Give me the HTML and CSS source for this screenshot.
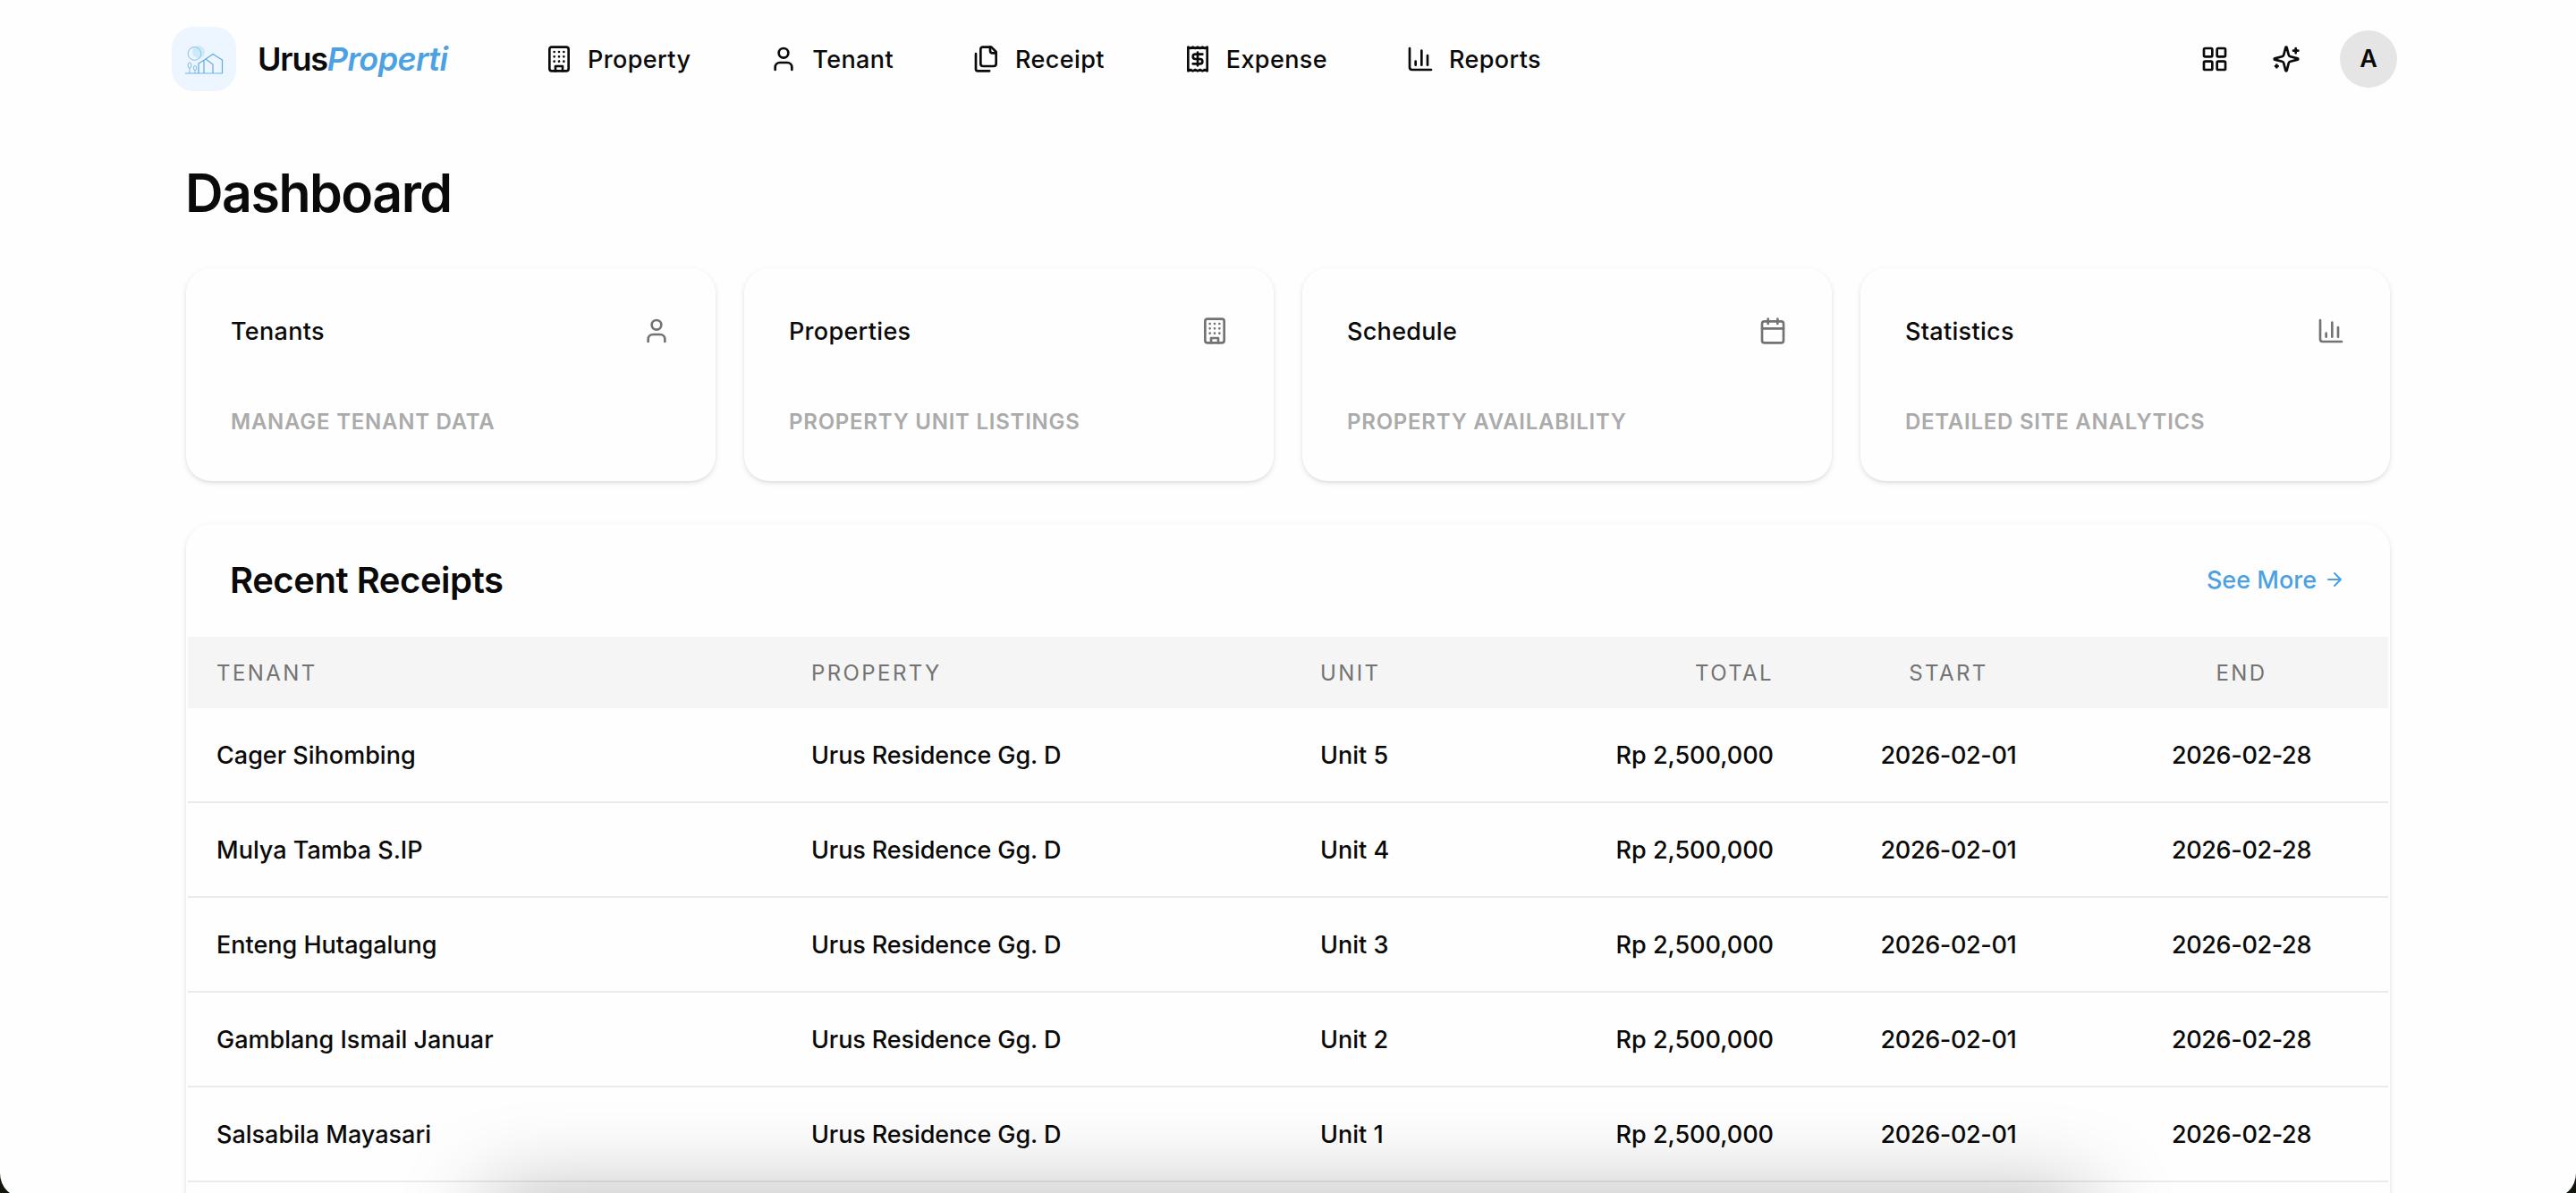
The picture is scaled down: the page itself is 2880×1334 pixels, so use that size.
FILE: index.html
```html
<!DOCTYPE html>
<html lang="en">
<head>
    <meta charset="UTF-8">
    <meta name="viewport" content="width=device-width, initial-scale=1.0">
    <title>UrusProperti - Dashboard</title>
    <link rel="stylesheet" href="styles.css">
</head>
<body>
    <!-- Icon set -->
    <svg class="sprite" aria-hidden="true">
        <symbol id="i-building" viewBox="0 0 24 24">
            <rect x="4" y="2" width="16" height="20" rx="2"/>
            <path d="M9 22v-4h6v4M8 6h.01M12 6h.01M16 6h.01M8 10h.01M12 10h.01M16 10h.01M8 14h.01M12 14h.01M16 14h.01"/>
        </symbol>
        <symbol id="i-user" viewBox="0 0 24 24">
            <circle cx="12" cy="7" r="4"/>
            <path d="M19 21v-2a4 4 0 0 0-4-4H9a4 4 0 0 0-4 4v2"/>
        </symbol>
        <symbol id="i-files" viewBox="0 0 24 24">
            <path d="M20 7h-3a2 2 0 0 1-2-2V2"/>
            <path d="M9 18a2 2 0 0 1-2-2V4a2 2 0 0 1 2-2h7l4 4v10a2 2 0 0 1-2 2Z"/>
            <path d="M3 7.6v12.8A1.6 1.6 0 0 0 4.6 22h9.8"/>
        </symbol>
        <symbol id="i-receipt" viewBox="0 0 24 24">
            <path d="M4 2v20l2-1 2 1 2-1 2 1 2-1 2 1 2-1 2 1V2l-2 1-2-1-2 1-2-1-2 1-2-1-2 1Z"/>
            <path d="M16 8h-6a2 2 0 1 0 0 4h4a2 2 0 1 1 0 4H8M12 17.5v-11"/>
        </symbol>
        <symbol id="i-chart" viewBox="0 0 24 24">
            <path d="M3 3v16a2 2 0 0 0 2 2h16M18 17V9M13 17V5M8 17v-3"/>
        </symbol>
        <symbol id="i-grid" viewBox="0 0 24 24">
            <rect x="3" y="3" width="7" height="7" rx="1"/>
            <rect x="14" y="3" width="7" height="7" rx="1"/>
            <rect x="14" y="14" width="7" height="7" rx="1"/>
            <rect x="3" y="14" width="7" height="7" rx="1"/>
        </symbol>
        <symbol id="i-sparkles" viewBox="0 0 24 24">
            <path d="M9.937 15.5A2 2 0 0 0 8.5 14.063l-6.135-1.582a.5.5 0 0 1 0-.962L8.5 9.936A2 2 0 0 0 9.937 8.5l1.582-6.135a.5.5 0 0 1 .963 0L14.063 8.5A2 2 0 0 0 15.5 9.937l6.135 1.581a.5.5 0 0 1 0 .964L15.5 14.063a2 2 0 0 0-1.437 1.437l-1.582 6.135a.5.5 0 0 1-.963 0z"/>
            <path d="M20 3v4M22 5h-4M4 17v2M5 18H3"/>
        </symbol>
        <symbol id="i-calendar" viewBox="0 0 24 24">
            <path d="M8 2v4M16 2v4M3 10h18"/>
            <rect x="3" y="4" width="18" height="18" rx="2"/>
        </symbol>
        <symbol id="i-arrow" viewBox="0 0 24 24">
            <path d="M5 12h14M12 5l7 7-7 7"/>
        </symbol>
    </svg>

    <div class="window">
        <header class="header">
            <a href="#" class="brand">
                <span class="brand-logo">
                    <svg viewBox="0 0 72 72">
                        <circle cx="30" cy="28" r="7" fill="#cdeaf9"/>
                        <circle cx="25.500" cy="30" r="7.300" stroke="#98caf0" stroke-width="1.200"/>
                        <path d="M15 52h42" stroke="#98caf0" stroke-width="1.600"/>
                        <path d="M20 52v-6M26 52v-4" stroke="#7cbaec"/>
                        <ellipse cx="20" cy="43" rx="1.900" ry="3" stroke="#7cbaec"/>
                        <ellipse cx="26" cy="46" rx="1.700" ry="2.500" stroke="#7cbaec"/>
                        <path d="M30 52V41l8-5 8 6v10M36 52V37M38 36l8-5.500 10.500 6.500v15" stroke="#5dabe7" stroke-width="1.200"/>
                    </svg>
                </span>
                <span class="brand-name">Urus<em>Properti</em></span>
            </a>
            <nav class="nav">
                <a href="#"><svg class="icon"><use href="#i-building"/></svg>Property</a>
                <a href="#"><svg class="icon"><use href="#i-user"/></svg>Tenant</a>
                <a href="#"><svg class="icon"><use href="#i-files"/></svg>Receipt</a>
                <a href="#"><svg class="icon"><use href="#i-receipt"/></svg>Expense</a>
                <a href="#"><svg class="icon"><use href="#i-chart"/></svg>Reports</a>
            </nav>
            <div class="actions">
                <svg class="icon"><use href="#i-grid"/></svg>
                <svg class="icon"><use href="#i-sparkles"/></svg>
                <span class="avatar">A</span>
            </div>
        </header>

        <main class="main">
            <h1>Dashboard</h1>

            <div class="cards">
                <a href="#" class="card">
                    <div class="card-top">Tenants<svg class="icon"><use href="#i-user"/></svg></div>
                    <p>MANAGE TENANT DATA</p>
                </a>
                <a href="#" class="card">
                    <div class="card-top">Properties<svg class="icon"><use href="#i-building"/></svg></div>
                    <p>PROPERTY UNIT LISTINGS</p>
                </a>
                <a href="#" class="card">
                    <div class="card-top">Schedule<svg class="icon"><use href="#i-calendar"/></svg></div>
                    <p>PROPERTY AVAILABILITY</p>
                </a>
                <a href="#" class="card">
                    <div class="card-top">Statistics<svg class="icon"><use href="#i-chart"/></svg></div>
                    <p>DETAILED SITE ANALYTICS</p>
                </a>
            </div>

            <section class="panel">
                <div class="panel-top">
                    <h2>Recent Receipts</h2>
                    <a href="#" class="more">See More<svg class="icon"><use href="#i-arrow"/></svg></a>
                </div>
                <table>
                    <colgroup>
                        <col class="c-tenant"><col class="c-property"><col class="c-unit"><col class="c-total"><col class="c-start"><col class="c-end">
                    </colgroup>
                    <thead>
                        <tr><th>TENANT</th><th>PROPERTY</th><th>UNIT</th><th class="right">TOTAL</th><th class="center">START</th><th class="center">END</th></tr>
                    </thead>
                    <tbody>
                        <tr><td>Cager Sihombing</td><td class="place">Urus Residence Gg. D</td><td>Unit 5</td><td class="right">Rp 2,500,000</td><td class="center date">2026-02-01</td><td class="center date">2026-02-28</td></tr>
                        <tr><td>Mulya Tamba S.IP</td><td class="place">Urus Residence Gg. D</td><td>Unit 4</td><td class="right">Rp 2,500,000</td><td class="center date">2026-02-01</td><td class="center date">2026-02-28</td></tr>
                        <tr><td>Enteng Hutagalung</td><td class="place">Urus Residence Gg. D</td><td>Unit 3</td><td class="right">Rp 2,500,000</td><td class="center date">2026-02-01</td><td class="center date">2026-02-28</td></tr>
                        <tr><td>Gamblang Ismail Januar</td><td class="place">Urus Residence Gg. D</td><td>Unit 2</td><td class="right">Rp 2,500,000</td><td class="center date">2026-02-01</td><td class="center date">2026-02-28</td></tr>
                        <tr><td>Salsabila Mayasari</td><td class="place">Urus Residence Gg. D</td><td>Unit 1</td><td class="right">Rp 2,500,000</td><td class="center date">2026-02-01</td><td class="center date">2026-02-28</td></tr>
                    </tbody>
                </table>
            </section>
        </main>

        <!-- Bottom sheet waiting below the fold -->
        <div class="sheet"></div>
    </div>
</body>
</html>
```
FILE: styles.css
```css
* {
    box-sizing: border-box;
}

html {
    background-color: #11150c;
    height: 100%;
    overflow: hidden;
}

body {
    margin: 0;
    font-family: Inter, 'Liberation Sans', sans-serif;
    font-size: 27px;
    font-weight: 500;
    color: #0a0a0a;
}

a {
    color: inherit;
    text-decoration: none;
}

.sprite {
    display: none;
}

.window {
    position: relative;
    height: 1340px;
    background-color: #fefefe;
    border-radius: 0 0 28px 28px;
    overflow: hidden;
}

.icon {
    width: 32px;
    height: 32px;
    flex: none;
    fill: none;
    stroke: currentColor;
    stroke-width: 2;
    stroke-linecap: round;
    stroke-linejoin: round;
}

/* Header */
.header {
    height: 132px;
    padding: 0 200px 0 192px;
    display: flex;
    align-items: center;
}

.brand {
    width: 417px;
    display: flex;
    align-items: center;
    gap: 24px;
}

.brand-logo {
    width: 72px;
    height: 72px;
    border-radius: 24px;
    background-color: #edf6fe;
}

.brand-logo svg {
    display: block;
    fill: none;
}

.brand-name {
    font-size: 36px;
    font-weight: 600;
    letter-spacing: -1.2px;
}

.brand-name em {
    color: #4ba1e4;
    letter-spacing: -0.6px;
}

.nav {
    display: flex;
    gap: 88px;
}

.nav a {
    display: flex;
    align-items: center;
    gap: 16px;
    letter-spacing: 0.38px;
}

.actions {
    margin-left: auto;
    display: flex;
    align-items: center;
    gap: 48px;
}

.avatar {
    width: 64px;
    height: 64px;
    margin-left: -4px;
    border-radius: 50%;
    background-color: #e5e5e5;
    font-weight: 600;
    line-height: 64px;
    text-align: center;
}

/* Content */
.main {
    padding: 48px 208px 0;
}

h1 {
    margin: 0 0 48px -1px;
    font-size: 59px;
    font-weight: 600;
    line-height: 72px;
    letter-spacing: -1.5px;
}

.cards {
    display: grid;
    grid-template-columns: repeat(4, 1fr);
    gap: 32px;
    margin-bottom: 48px;
}

.card,
.panel {
    background-color: #fefefe;
    border-radius: 28px;
    box-shadow: 0 2px 6px rgba(0, 0, 0, 0.1), 0 2px 4px -2px rgba(0, 0, 0, 0.1);
}

.card {
    height: 238px;
    padding: 50px;
}

.card-top {
    height: 40px;
    display: flex;
    justify-content: space-between;
    align-items: center;
    letter-spacing: 0.3px;
}

.card .icon {
    color: #737373;
}

.card p {
    margin: 66px 0 0;
    font-size: 24px;
    font-weight: 600;
    line-height: 32px;
    letter-spacing: 0.75px;
    color: #ababab;
}

.panel {
    height: 860px;
    padding: 0 2px;
}

.panel-top {
    height: 126px;
    padding: 0 48px 2px;
    display: flex;
    justify-content: space-between;
    align-items: center;
}

h2 {
    margin: 0 0 0 -1px;
    font-size: 40px;
    font-weight: 600;
    letter-spacing: -0.45px;
}

.more {
    display: flex;
    align-items: center;
    gap: 8px;
    color: #4ba1e4;
}

.more .icon {
    width: 24px;
    height: 24px;
}

/* Table */
table {
    width: 100%;
    table-layout: fixed;
    border-collapse: separate;
    border-spacing: 0;
}

.c-tenant { width: 665px; }
.c-property { width: 569px; }
.c-unit { width: 286px; }
.c-total { width: 285px; }
.c-start { width: 329px; }
.c-end { width: 326px; }

th {
    height: 80px;
    padding: 0 32px;
    background-color: #f5f5f5;
    color: #737373;
    font-size: 24px;
    font-weight: 400;
    letter-spacing: 2.4px;
    text-align: left;
}

td {
    height: 106px;
    padding: 0 32px;
    border-bottom: 2px solid #ebebeb;
}

.right {
    text-align: right;
}

.center {
    text-align: center;
}

th.center {
    padding-right: 34px;
}

.place {
    letter-spacing: -0.12px;
}

.date {
    padding-right: 34px;
    letter-spacing: -0.35px;
}

/* Only the sheet's shadow reaches into the viewport */
.sheet {
    position: absolute;
    left: 544px;
    right: 544px;
    top: 1336px;
    height: 200px;
    box-shadow: 0 0 100px rgba(0, 0, 0, 0.28);
}
```
